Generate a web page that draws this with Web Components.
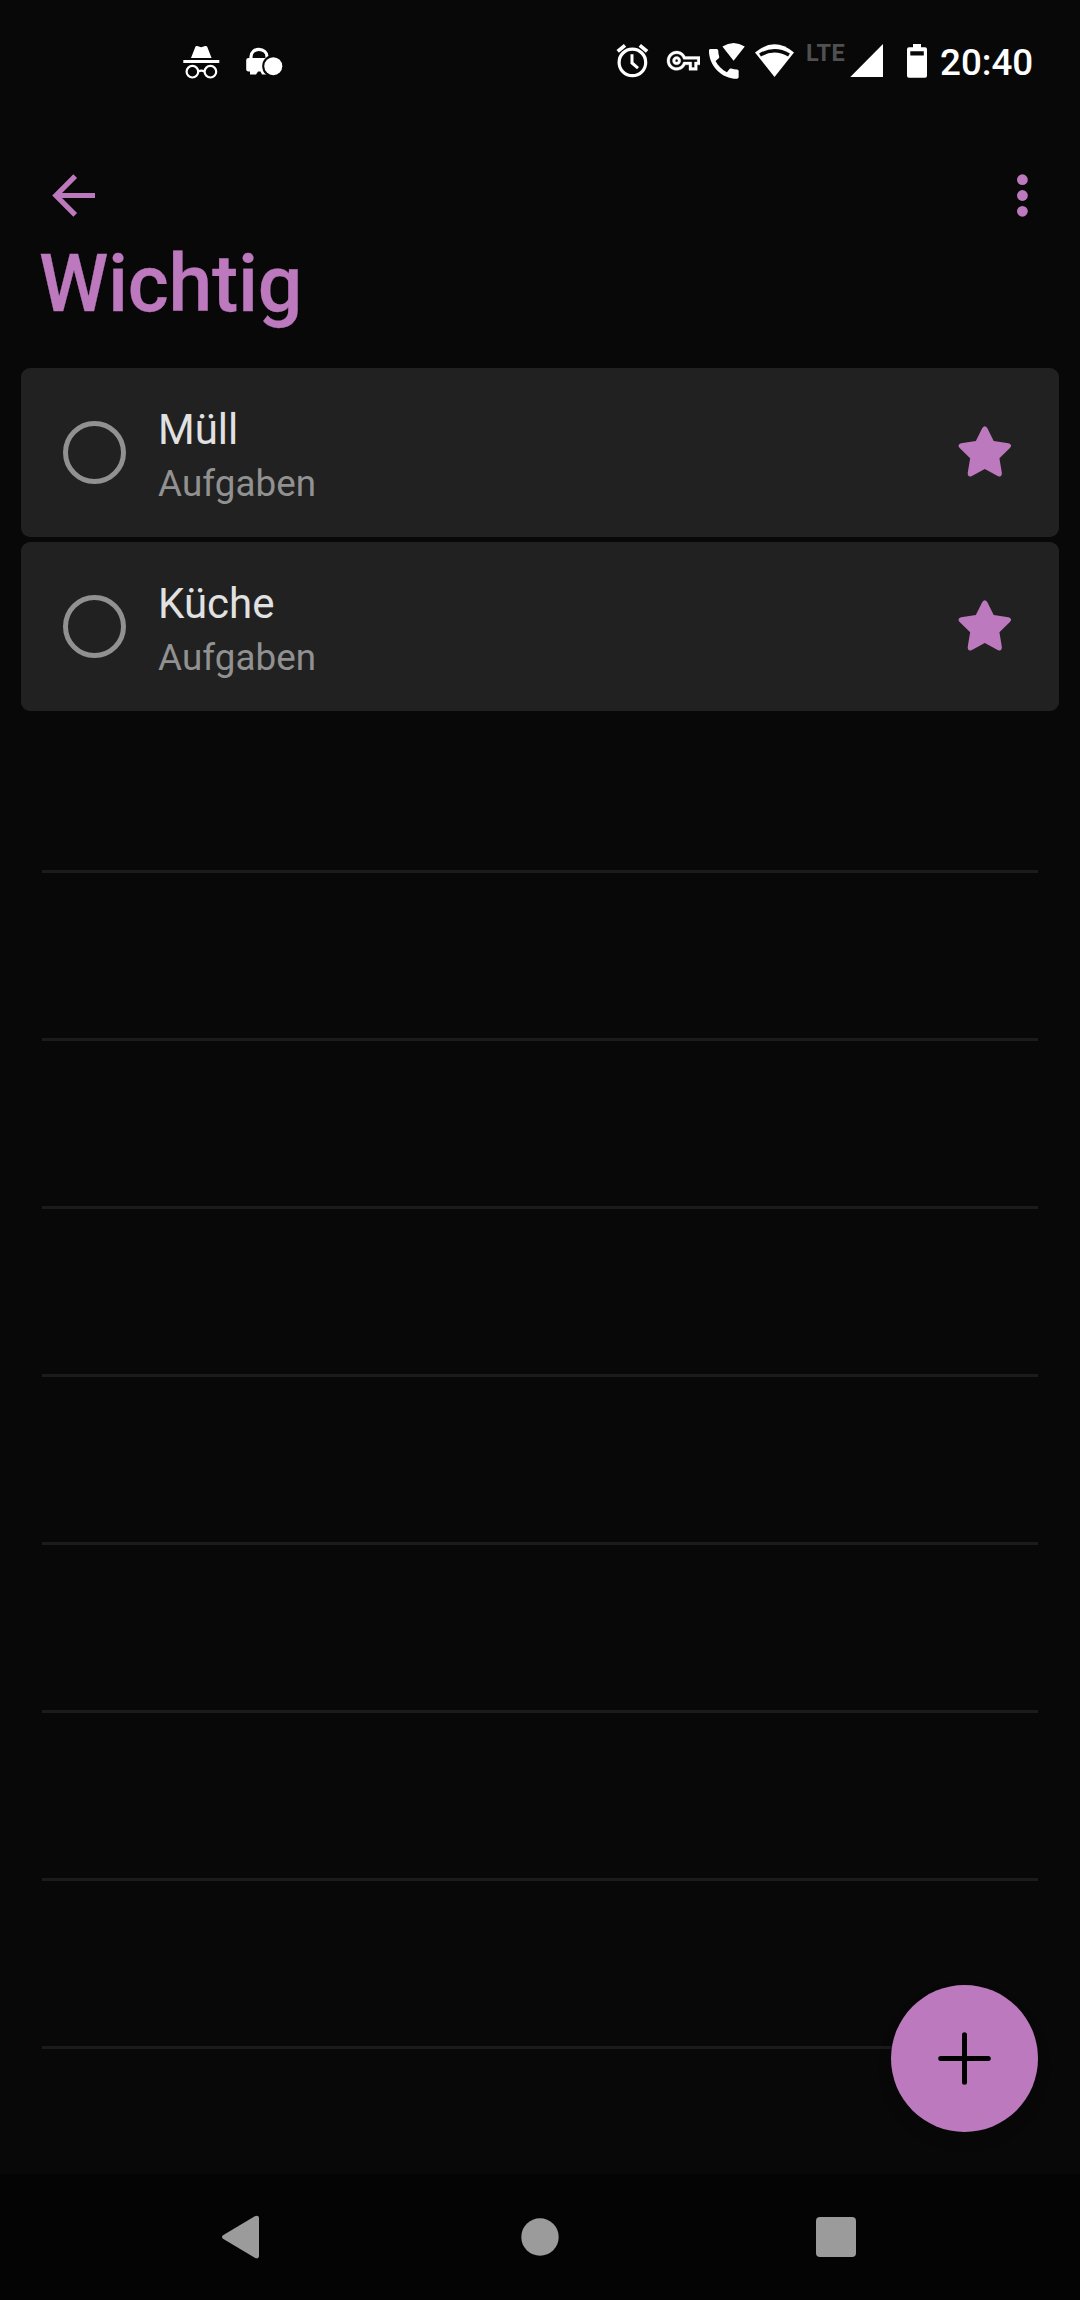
<!DOCTYPE html>
<html lang="de">
<head>
<meta charset="utf-8">
<title>Wichtig</title>
<style>
html,body{margin:0;padding:0;background:#080808}
</style>
</head>
<body>
<todo-app></todo-app>
<script>
const define=(name,html)=>customElements.define(name,class extends HTMLElement{
  constructor(){
    super();
    const t=document.createElement('template');
    t.innerHTML=html;
    this.attachShadow({mode:'open'}).appendChild(t.content.cloneNode(true));
  }
});

define('status-bar',`
<style>
:host{display:flex;box-sizing:border-box;height:126px;padding:32px 0 0 183px;align-items:flex-start;color:#fff;font-family:Roboto,sans-serif}
svg{display:block;flex:none;height:60px;fill:#fff}
.space{flex:1}
.lte{font-size:23.5px;line-height:43px;font-weight:700;color:#505050;width:40px;margin:0 4px 0 11px;letter-spacing:.4px;white-space:nowrap}
.clock{font-size:36.75px;line-height:61px;font-weight:500;width:93px;margin:0 47px 0 12px;white-space:nowrap}
</style>
<svg width="37" viewBox="183 32 37 60">
  <path d="M191 58 195.4 46.7Q195.8 45.6 197.2 46L201.2 47.3 205.2 46Q206.6 45.6 207.2 46.7L211.6 58ZM183.3 60h36v3h-36Z"/>
  <g fill="none" stroke="#fff" stroke-width="2.2"><circle cx="192.4" cy="71.7" r="5.8"/><circle cx="210.4" cy="71.7" r="5.8"/><path d="M198 71.6q3.3-2 6.6 0"/></g>
</svg>
<svg width="63" viewBox="220 32 63 60">
  <path d="M251 58.5V56.5a8 7.2 0 0 1 16 0V59" fill="none" stroke="#fff" stroke-width="3.2"/>
  <path d="M248.5 58H267V74.6H262L260.5 71.6H258L256 74.6H250V71.6H248.5Q246.2 71.6 246.2 69.5V60Q246.2 58 248.5 58Z"/>
  <circle cx="273.3" cy="66.2" r="11.1" fill="#080808"/><circle cx="273.3" cy="66.2" r="9"/>
</svg>
<span class="space"></span>
<svg width="34" viewBox="616 32 34 60">
  <g fill="none" stroke="#fff" stroke-width="3.2"><circle cx="632.4" cy="62.4" r="13.3"/><path d="M617.7 51.4 625 45.3M639.8 45.3 647.1 51.4" stroke-width="3.7"/><path d="M632 54.2V63L638 68.2" stroke-width="3"/></g>
</svg>
<svg width="50" viewBox="650 32 50 60">
  <g transform="translate(667 44.2) scale(1.375)" stroke="#fff" stroke-width=".25"><path d="M22 19h-6v-4h-2.68c-1.14 2.42-3.6 4-6.32 4-3.86 0-7-3.14-7-7s3.14-7 7-7c2.72 0 5.17 1.58 6.32 4H24v6h-2v4zm-4-2h2v-4h2v-2H11.94l-.23-.67C11.01 8.34 9.11 7 7 7c-2.76 0-5 2.24-5 5s2.24 5 5 5c2.11 0 4.01-1.34 4.71-3.33l.23-.67H18v4zM7 15c-1.65 0-3-1.35-3-3s1.35-3 3-3 3 1.35 3 3-1.35 3-3 3zm0-4c-.55 0-1 .45-1 1s.45 1 1 1 1-.45 1-1-.45-1-1-1z"/></g>
</svg>
<svg width="50" viewBox="700 32 50 60">
  <g transform="translate(704 44.1) scale(1.65)"><path d="M20.01 15.38c-1.23 0-2.42-.2-3.53-.56-.35-.12-.74-.03-1.01.24l-1.57 1.97c-2.83-1.35-5.48-3.9-6.89-6.83l1.95-1.66c.27-.28.35-.67.24-1.02-.37-1.11-.56-2.3-.56-3.53 0-.54-.45-.99-.99-.99H4.19C3.65 3 3 3.24 3 3.99 3 13.28 10.73 21 20.01 21c.71 0 .99-.63.99-1.18v-3.45c0-.54-.45-.99-.99-.99z"/></g>
  <path d="M722.4 46.6Q733.6 39.4 744.8 46.6L733.6 60.8Z"/>
</svg>
<svg width="45" viewBox="750 32 45 60">
  <path d="M755 52.6Q774.5 36 794 52.6L774.5 77Z"/>
  <path d="M760 55Q774.5 46.6 789 55" fill="none" stroke="#080808" stroke-width="3.6"/>
</svg>
<span class="lte">LTE</span>
<svg width="33" viewBox="850 32 33 60"><path d="M850.3 77H883V44Z"/></svg>
<svg width="45" viewBox="883 32 45 60"><path fill-rule="evenodd" d="M913 44h8v3.3h4q2 0 2 2V75.7q0 2-2 2h-16q-2 0-2-2V49.3q0-2 2-2h4ZM910.3 51.2v4.4h13.5v-4.4Z"/></svg>
<span class="clock">20:40</span>`);

define('app-header',`
<style>
:host{display:block;color:#bd79bd;font-family:Roboto,sans-serif}
.bar{display:flex;justify-content:space-between;height:112px;padding:0 50px 0 50px}
svg{display:block;margin-top:39px;fill:currentColor}
h1{margin:0;padding-left:39px;font-size:78.75px;line-height:92px;font-weight:500;letter-spacing:-.3px;-webkit-text-stroke:.3px currentColor}
</style>
<div class="bar">
<svg width="50" height="60" viewBox="50 165 50 60"><path d="M95 195.5H56M75.2 176.2 55.9 195.5 75.2 214.8" fill="none" stroke="currentColor" stroke-width="5.2"/></svg>
<svg width="16" height="60" viewBox="1014 165 16 60"><circle cx="1022.4" cy="179.7" r="5.4"/><circle cx="1022.4" cy="195.5" r="5.4"/><circle cx="1022.4" cy="211.3" r="5.4"/></svg>
</div>
<h1><slot></slot></h1>`);

define('task-item',`
<style>
:host{display:flex;align-items:flex-start;box-sizing:border-box;height:169px;border-radius:9px;background:#212121;padding:0 48px 0 42px;font-family:Roboto,sans-serif}
.check{box-sizing:border-box;width:63px;height:63px;margin-top:53px;border:5px solid #919191;border-radius:50%}
.text{flex:1;padding:37px 0 0 32px;display:flex;flex-direction:column;gap:7px}
.name{font-size:42px;line-height:50px;color:#e1e1e1}
.list{font-size:36.75px;line-height:43px;color:#919191;letter-spacing:.1px}
svg{display:block;margin-top:57px;fill:#bd79bd}
</style>
<div class="check"></div>
<div class="text"><div class="name"><slot></slot></div><div class="list"><slot name="list"></slot></div></div>
<svg width="54" height="54" viewBox="956.1 424.5 55 55"><path d="M981.9 427.6Q984.4 424 986.9 427.6L993.5 440.9 1008.5 443.2Q1013 444.6 1010 448L999.3 458.3 1001.8 473.5Q1001.8 478 998 476.6L984.4 469.3 970.8 476.6Q967 478 967 473.5L969.5 458.3 958.8 448Q955.8 444.6 960.3 443.2L975.3 440.9Z"/></svg>`);

define('ruled-lines',`
<style>
:host{display:flex;flex-direction:column;gap:165px;padding:159px 42px 0}
i{display:block;height:3px;background:#1b1b1b}
</style>${'<i></i>'.repeat(8)}`);

define('add-button',`
<style>
:host{display:flex;align-items:center;justify-content:center;width:147px;height:147px;border-radius:50%;background:#bd79bd;box-shadow:0 8px 14px rgba(0,0,0,.15)}
svg{display:block}
</style>
<svg width="57" height="57" viewBox="0 0 57 57"><path d="M28.5 4.7V52.3M4.7 28.5H52.3" stroke="#000" stroke-width="5" stroke-linecap="round"/></svg>`);

define('nav-bar',`
<style>
:host{display:flex;align-items:flex-start;box-sizing:border-box;height:126px;padding:38px 222px 0;justify-content:space-between;background:#040404}
svg{display:block;fill:#9b9b9b}
</style>
<svg width="42" height="50" viewBox="222 2212 42 50"><path d="M223 2235.2 254.8 2216.3Q259 2214.6 259 2218.6V2255.4Q259 2259.4 254.8 2257.7L223 2238.8Q221 2237 223 2235.2Z"/></svg>
<svg width="40" height="50" viewBox="520 2212 40 50"><circle cx="540" cy="2237" r="18.7"/></svg>
<svg width="42" height="50" viewBox="816 2212 42 50"><rect x="816" y="2217" width="40" height="40" rx="4"/></svg>`);

define('todo-app',`
<style>
:host{display:flex;flex-direction:column;position:relative;width:1080px;height:2300px;background:#080808;overflow:hidden}
.list{display:flex;flex-direction:column;gap:5px;padding:38px 21px 0}
main{flex:1}
add-button{position:absolute;right:42px;bottom:168px}
</style>
<status-bar></status-bar>
<app-header>Wichtig</app-header>
<main>
<div class="list">
<task-item>Müll<span slot="list">Aufgaben</span></task-item>
<task-item>Küche<span slot="list">Aufgaben</span></task-item>
</div>
<ruled-lines></ruled-lines>
</main>
<nav-bar></nav-bar>
<add-button role="button"></add-button>`);
</script>
</body>
</html>
